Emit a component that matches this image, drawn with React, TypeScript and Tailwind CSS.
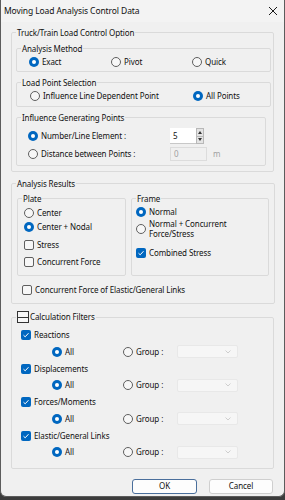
import React from 'react';

const font = "font-['Segoe_UI','Noto_Sans',sans-serif]";

function Radio({ checked }: { checked?: boolean }) {
  return checked ? (
    <span className="flex h-[10px] w-[10px] shrink-0 items-center justify-center rounded-full bg-[#0067c0]">
      <span className="h-[4px] w-[4px] rounded-full bg-white" />
    </span>
  ) : (
    <span className="h-[10px] w-[10px] shrink-0 rounded-full border border-[#5f5f5f] bg-[#f7f7f7]" />
  );
}

function Check({ checked }: { checked?: boolean }) {
  return checked ? (
    <span className="flex h-[10px] w-[10px] shrink-0 items-center justify-center rounded-[2px] bg-[#0067c0]">
      <svg width="8" height="8" viewBox="0 0 8 8">
        <path d="M1.5 4.2 L3.2 5.8 L6.5 2.2" fill="none" stroke="white" strokeWidth="1" />
      </svg>
    </span>
  ) : (
    <span className="h-[10px] w-[10px] shrink-0 rounded-[2px] border border-[#5f5f5f] bg-[#f7f7f7]" />
  );
}

function Opt({ type, checked, label, className = '' }: { type: 'radio' | 'check'; checked?: boolean; label: React.ReactNode; className?: string }) {
  return (
    <div className={`flex items-center gap-[3px] ${className}`}>
      {type === 'radio' ? <Radio checked={checked} /> : <Check checked={checked} />}
      <span className="whitespace-nowrap">{label}</span>
    </div>
  );
}

function Group({ title, className = '', children }: { title: React.ReactNode; className?: string; children: React.ReactNode }) {
  return (
    <fieldset className={`rounded-[2px] border border-[#dadada] ${className}`}>
      <legend className="ml-[4px] flex h-[11px] items-center px-[1px] leading-[11px]">{title}</legend>
      {children}
    </fieldset>
  );
}

function Dropdown() {
  return (
    <div className="flex h-[13px] w-[61px] items-center justify-end rounded-[2px] border border-[#e8e8e8] bg-[#f6f6f6] pr-[6px]">
      <svg width="6" height="4" viewBox="0 0 6 4">
        <path d="M0.5 0.5 L3 3 L5.5 0.5" fill="none" stroke="#c4c4c4" strokeWidth="0.8" />
      </svg>
    </div>
  );
}

const filters = ['Reactions', 'Displacements', 'Forces/Moments', 'Elastic/General Links'];

export default function App() {
  return (
    <div className={`h-[500px] w-[285px] bg-[#3c3c3c] text-[8px] tracking-[-0.1px] text-[#111] ${font}`}>
      <div className="flex h-[497px] flex-col rounded-b-[6px] border border-t-0 border-[#5c5c5c] bg-[#f0f0f0]">
        {/* title bar */}
        <div className="flex h-[22px] items-center justify-between bg-[#f3f3f3] pl-[3px] pr-[6px]">
          <span className="text-[8.5px]">Moving Load Analysis Control Data</span>
          <svg width="10" height="10" viewBox="0 0 10 10">
            <path d="M1 1 L9 9 M9 1 L1 9" stroke="#1a1a1a" strokeWidth="1" />
          </svg>
        </div>

        <div className="flex flex-col px-[10px] pt-[5px]">
          {/* Truck/Train Load Control Option */}
          <Group title="Truck/Train Load Control Option">
            <div className="flex flex-col pb-[5px] pl-[4px] pr-[2px] pt-[5px]">
              <Group title="Analysis Method">
                <div className="flex h-[16px] items-center pl-[12px]">
                  <Opt type="radio" checked label="Exact" className="w-[82px]" />
                  <Opt type="radio" label="Pivot" className="w-[81px]" />
                  <Opt type="radio" label="Quick" />
                </div>
                <div className="h-[1px]" />
              </Group>
              <Group title="Load Point Selection" className="mt-[5px]">
                <div className="flex h-[16px] items-center pl-[13px]">
                  <Opt type="radio" label="Influence Line Dependent Point" className="w-[163px]" />
                  <Opt type="radio" checked label="All Points" />
                </div>
                <div className="h-[2px]" />
              </Group>
              <Group title="Influence Generating Points" className="mr-[5px] mt-[5px]">
                <div className="flex flex-col pb-[2px] pl-[11px] pt-[4px]">
                  <div className="flex h-[18px] items-center">
                    <Opt type="radio" checked label="Number/Line Element :" className="w-[142px]" />
                    <div className="flex h-[16px] items-center">
                      <div className="flex h-[16px] w-[26px] items-center border-b border-[#c8c8c8] bg-white pl-[3px]">5</div>
                      <div className="flex h-[16px] w-[8px] flex-col border border-[#b8b8b8] bg-[#e4e4e4]">
                        <div className="flex flex-1 items-center justify-center border-b border-[#b8b8b8]">
                          <svg width="4" height="3" viewBox="0 0 4 3"><path d="M0 3 L2 0 L4 3 Z" fill="#333" /></svg>
                        </div>
                        <div className="flex flex-1 items-center justify-center">
                          <svg width="4" height="3" viewBox="0 0 4 3"><path d="M0 0 L2 3 L4 0 Z" fill="#333" /></svg>
                        </div>
                      </div>
                    </div>
                  </div>
                  <div className="flex h-[18px] items-center">
                    <Opt type="radio" label="Distance between Points :" className="w-[142px]" />
                    <div className="flex h-[14px] w-[37px] items-center border border-[#dcdcdc] bg-[#f0f0f0] pl-[3px] text-[#a0a0a0]">0</div>
                    <span className="ml-[6px] text-[#a0a0a0]">m</span>
                  </div>
                </div>
              </Group>
            </div>
          </Group>

          {/* Analysis Results */}
          <Group title="Analysis Results" className="mt-[6px]">
            <div className="flex flex-col px-[5px] pb-[6px] pt-[4px]">
              <div className="flex gap-[5px]">
                <Group title="Plate" className="w-[109px]">
                  <div className="flex flex-col pb-[6px] pl-[6px]">
                    <Opt type="radio" label="Center" className="mt-[2px] h-[14px]" />
                    <Opt type="radio" checked label="Center + Nodal" className="h-[14px]" />
                    <Opt type="check" label="Stress" className="mt-[4px] h-[14px]" />
                    <Opt type="check" label="Concurrent Force" className="mt-[3px] h-[14px]" />
                  </div>
                </Group>
                <Group title="Frame" className="w-[138px]">
                  <div className="flex flex-col pl-[4px]">
                    <Opt type="radio" checked label="Normal" className="mt-[0.5px] h-[14px]" />
                    <div className="flex h-[20px] items-center gap-[3px]">
                      <Radio />
                      <span className="leading-[10px]">
                        Normal + Concurrent
                        <br />
                        Force/Stress
                      </span>
                    </div>
                    <Opt type="check" checked label="Combined Stress" className="mt-[7px] h-[14px]" />
                  </div>
                </Group>
              </div>
              <Opt type="check" label="Concurrent Force of Elastic/General Links" className="ml-[5px] mt-[7px] h-[14px]" />
            </div>
          </Group>

          {/* Calculation Filters */}
          <fieldset className="mt-[7px] rounded-[2px] border border-[#dadada]">
            <legend className="ml-[4px] flex h-[12px] items-center gap-[1px] px-[1px]">
              <span className="flex h-[12px] w-[12px] items-center border border-[#333] bg-[#f7f7f7]">
                <span className="h-[1px] w-full bg-[#333]" />
              </span>
              Calculation Filters
            </legend>
            <div className="flex flex-col pb-[6.5px] pl-[9px] pt-[4px]">
              {filters.map((f) => (
                <div key={f} className="flex flex-col">
                  <Opt type="check" checked label={f} className="h-[16px]" />
                  <div className="flex h-[17.5px] items-center pl-[31px]">
                    <Opt type="radio" checked label="All" className="w-[71px]" />
                    <Opt type="radio" label="Group :" className="w-[54px]" />
                    <Dropdown />
                  </div>
                </div>
              ))}
            </div>
          </fieldset>

          {/* buttons */}
          <div className="mt-[10px] flex justify-end gap-[12px] pr-[1px]">
            <button className="h-[15px] w-[65px] rounded-[3px] border border-[#4a6f9c] bg-[#fdfdfd]">OK</button>
            <button className="h-[15px] w-[64px] rounded-[3px] border border-[#cfcfcf] bg-[#fdfdfd]">Cancel</button>
          </div>
        </div>
      </div>
    </div>
  );
}
